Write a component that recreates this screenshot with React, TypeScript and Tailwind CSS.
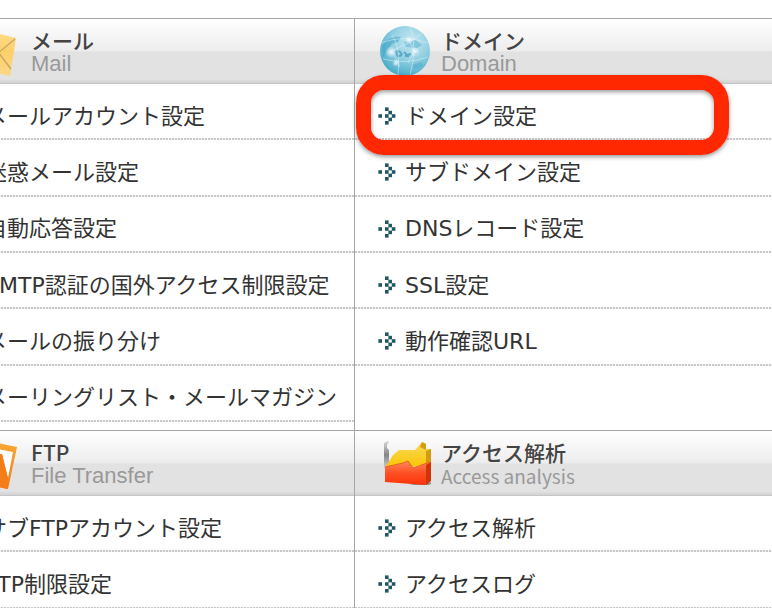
import type { ReactNode } from "react";

type MenuItem = { label: string; highlighted?: boolean };

function MailIcon() {
  return (
    <svg width="62" height="56" viewBox="0 0 62 56" aria-hidden="true">
      <defs>
        <linearGradient id="mail" x1="0" y1="0" x2="0" y2="1">
          <stop offset="0" stopColor="#fbe092" />
          <stop offset="0.5" stopColor="#fdd069" />
          <stop offset="1" stopColor="#fcd688" />
        </linearGradient>
      </defs>
      <path d="M8 3 L57 15 L51 53 L2 42 Z" fill="url(#mail)" />
      <path d="M56 16 L38 31 L8 4 M52 46 L39 29 M2 42 L31 25" fill="none" stroke="#c4a565" strokeWidth="1.3" />
    </svg>
  );
}

function GlobeIcon() {
  return (
    <svg width="52" height="52" viewBox="0 0 52 52" aria-hidden="true">
      <defs>
        <radialGradient id="globe" cx="0.62" cy="0.3" r="0.75">
          <stop offset="0" stopColor="#c5e8f2" />
          <stop offset="0.5" stopColor="#93d0e2" />
          <stop offset="1" stopColor="#44a9c7" />
        </radialGradient>
        <radialGradient id="glow">
          <stop offset="0" stopColor="#fff" stopOpacity="0.9" />
          <stop offset="1" stopColor="#fff" stopOpacity="0" />
        </radialGradient>
        <clipPath id="disc">
          <circle cx="26" cy="26" r="25" />
        </clipPath>
      </defs>
      <circle cx="26" cy="26" r="25" fill="url(#globe)" />
      <g clipPath="url(#disc)">
        <path d="M3 22 C6 15 13 11 22 12 L19 17 L13 19 L8 26 L4 32 Z" fill="#3a9fc2" opacity="0.5" />
        <path d="M25 17 L37 15 L43 20 L38 23 L27 22 Z M33 40 L42 37 L44 41 L36 44 Z M12 36 L21 38 L17 42 Z" fill="#4aa9c9" opacity="0.45" />
        <path d="M17 27 q3 -2 5 1 t-3 3 z M25 27 l3 3 l4 -1 M34 27 l4 2 M26 31 h4" fill="none" stroke="#3590b8" strokeWidth="2" opacity="0.65" />
        <path d="M13 10 Q22 22 19 51 M31 2 Q39 22 31 50 M2 18 Q24 9 49 18 M4 34 Q27 40 49 32 M13 26 L31 17 L35 27 L29 38 M13 26 L21 42 M31 17 L43 8" fill="none" stroke="#e4f6fb" strokeWidth="0.8" opacity="0.6" />
        <circle cx="12" cy="27" r="6" fill="url(#glow)" />
        <circle cx="36" cy="27" r="5" fill="url(#glow)" />
        <circle cx="30" cy="15" r="4" fill="url(#glow)" />
        <circle cx="17" cy="38" r="4" fill="url(#glow)" />
      </g>
    </svg>
  );
}

function FtpIcon() {
  return (
    <svg width="62" height="56" viewBox="0 0 62 56" aria-hidden="true">
      <defs>
        <linearGradient id="ftp" x1="0" y1="0" x2="0" y2="1">
          <stop offset="0" stopColor="#f9ae35" />
          <stop offset="1" stopColor="#f27a1a" />
        </linearGradient>
      </defs>
      <path d="M8 2 L58 12 L49 54 L2 45 Z" fill="url(#ftp)" />
      <path d="M13 9 L54 17 L49 43 L43 19 L38 19 L32 47 L8 41 Z" fill="#fff" />
      <path d="M34 18 L43 19 L50 48 L48 54 L41 52 Z" fill="#f47d18" />
    </svg>
  );
}

function AnalysisIcon() {
  return (
    <svg width="52" height="48" viewBox="0 0 52 48" aria-hidden="true">
      <defs>
        <linearGradient id="chart-top" x1="0" y1="0" x2="0" y2="1">
          <stop offset="0" stopColor="#f8d95c" />
          <stop offset="1" stopColor="#fcc400" />
        </linearGradient>
        <linearGradient id="chart-front" x1="0" y1="0" x2="0" y2="1">
          <stop offset="0" stopColor="#ff8a5c" />
          <stop offset="0.5" stopColor="#ff4f24" />
          <stop offset="1" stopColor="#ff3408" />
        </linearGradient>
        <linearGradient id="chart-wall" x1="0" y1="0" x2="0" y2="1">
          <stop offset="0" stopColor="#d8d8d8" />
          <stop offset="0.5" stopColor="#858585" />
          <stop offset="1" stopColor="#d5d5d5" />
        </linearGradient>
      </defs>
      <path d="M5 4 L9 2 L10 3 L8 6 L8 9 L10 11 L10 24 L5 30 Z" fill="url(#chart-wall)" />
      <path d="M30 45 L55 43 L50 46 L36 46 Z" fill="#8d8d8d" />
      <path d="M6 29 L14 16 L20 11 L36 11 L43 3 L47 5 L47 10 L52 10 L52 24 L33 28 L30 23 L10 29 Z" fill="url(#chart-top)" />
      <path d="M43 3 L47 5 L47 11 L41 8 Z M47 12 L52 10 L52 23 L47 26 Z" fill="#d49c10" />
      <path d="M6 28 L24 24 L29 22 L34 29 L51 23 L51 42 L46 46 L6 43 Z" fill="url(#chart-front)" />
      <path d="M6 28 L24 24 L29 22 L34 29 L51 23" fill="none" stroke="#e8641a" strokeWidth="1" />
      <path d="M47 26 L52 23 L52 42 L47 46 Z" fill="#d03407" />
    </svg>
  );
}

function Bullet() {
  return (
    <svg className="shrink-0" width="18" height="18" viewBox="0 0 18 18" fill="#1f5762" aria-hidden="true">
      <rect x="0.4" y="7.2" width="3.6" height="3.6" />
      <rect x="7" y="0.4" width="3.6" height="3.6" />
      <rect x="7" y="7.2" width="3.6" height="3.6" />
      <rect x="7" y="14" width="3.6" height="3.6" />
      <rect x="10.4" y="3.8" width="3.6" height="3.6" />
      <rect x="10.4" y="10.6" width="3.6" height="3.6" />
      <rect x="13.8" y="7.2" width="3.6" height="3.6" />
    </svg>
  );
}

function Panel({ icon, title, subtitle, items, subtitleFont = "font-['Liberation_Sans',sans-serif] text-[22px]" }: {
  icon: ReactNode;
  title: string;
  subtitle: string;
  items: MenuItem[];
  subtitleFont?: string;
}) {
  return (
    <section>
      <header className="flex h-[66px] items-center gap-2 border-t border-b border-t-[#a6a6a6] border-b-[#c6c6c6] bg-[linear-gradient(#fff_0%,#ededed_49%,#e2e2e2_52%,#e2e2e2_94%,#d2d2d2_100%)] pl-6">
        {icon}
        <div className="px-0.5 pt-0.5">
          <h2 className="font-['Noto_Sans_CJK_JP',sans-serif] text-[21px] leading-[23px] font-medium text-[#444]">{title}</h2>
          <p className={`leading-[23px] text-[#999] ${subtitleFont}`}>{subtitle}</p>
        </div>
      </header>
      <ul className="grid h-[338px] grid-rows-6">
        {items.map((item) => (
          <li
            key={item.label}
            className="relative flex items-center bg-[repeating-linear-gradient(90deg,#c8c8c8_0_2px,#f4f4f4_2px_3px)] bg-[length:100%_2px] bg-bottom bg-no-repeat pt-2 pl-[23px]"
          >
            <a href="#" className="flex items-center gap-[9px] whitespace-nowrap">
              <Bullet />
              <span className="pt-px">{item.label}</span>
            </a>
            {item.highlighted && (
              <span className="pointer-events-none absolute -top-[9px] left-px z-10 h-20 w-[373px] rounded-[28px] border-[15px] border-[#ff2800] shadow-[0_2px_4px_rgba(0,0,0,0.4),inset_0_2px_4px_rgba(0,0,0,0.4)]" />
            )}
          </li>
        ))}
      </ul>
    </section>
  );
}

const mailItems: MenuItem[] = [
  { label: "メールアカウント設定" },
  { label: "迷惑メール設定" },
  { label: "自動応答設定" },
  { label: "SMTP認証の国外アクセス制限設定" },
  { label: "メールの振り分け" },
  { label: "メーリングリスト・メールマガジン" },
];

const domainItems: MenuItem[] = [
  { label: "ドメイン設定", highlighted: true },
  { label: "サブドメイン設定" },
  { label: "DNSレコード設定" },
  { label: "SSL設定" },
  { label: "動作確認URL" },
];

const ftpItems: MenuItem[] = [{ label: "サブFTPアカウント設定" }, { label: "FTP制限設定" }];

const analysisItems: MenuItem[] = [{ label: "アクセス解析" }, { label: "アクセスログ" }];

export default function App() {
  return (
    <main
      lang="ja"
      className="h-screen overflow-hidden bg-white pt-[18px] font-['DejaVu_Sans','Noto_Sans_CJK_JP',sans-serif] text-[22px] leading-[32px] text-[#333]"
    >
      <div className="-ml-[65px] flex">
        <div className="flex w-[420px] shrink-0 flex-col gap-2 border-r border-[#a6a6a6]">
          <Panel icon={<MailIcon />} title="メール" subtitle="Mail" items={mailItems} />
          <Panel icon={<FtpIcon />} title="FTP" subtitle="File Transfer" items={ftpItems} />
        </div>
        <div className="flex min-w-0 flex-1 flex-col gap-2">
          <Panel icon={<GlobeIcon />} title="ドメイン" subtitle="Domain" items={domainItems} />
          <Panel
            icon={<AnalysisIcon />}
            title="アクセス解析"
            subtitle="Access analysis"
            items={analysisItems}
            subtitleFont="font-['Noto_Sans_CJK_JP',sans-serif] text-[19px]"
          />
        </div>
      </div>
    </main>
  );
}
